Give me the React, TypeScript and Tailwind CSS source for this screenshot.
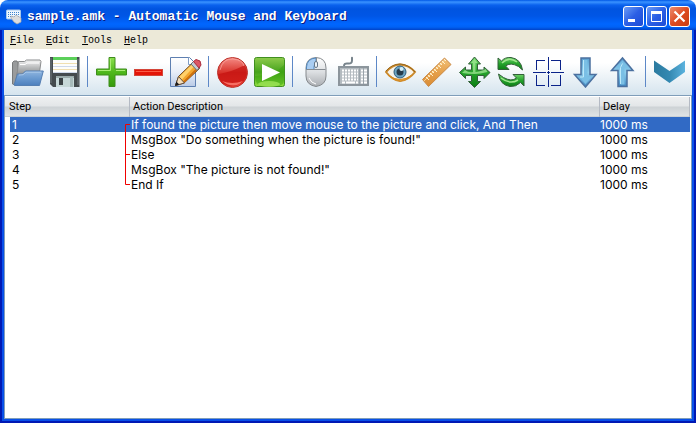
import type { ReactNode } from "react";

type Branch = "start" | "through" | "middle" | "end";

type Step = { text: string; delay: string; branch: Branch };

const steps: Step[] = [
  { text: "If found the picture then move mouse to the picture and click, And Then", delay: "1000 ms", branch: "start" },
  { text: 'MsgBox "Do something when the picture is found!"', delay: "1000 ms", branch: "through" },
  { text: "Else", delay: "1000 ms", branch: "middle" },
  { text: 'MsgBox "The picture is not found!"', delay: "1000 ms", branch: "through" },
  { text: "End If", delay: "1000 ms", branch: "end" },
];

const branchPaths: Record<Branch, string> = {
  start: "M6 7.5H.5V15",
  through: "M.5 0V15",
  middle: "M.5 0V15M.5 7.5H6",
  end: "M.5 0V7.5H5",
};

function Icon({ children }: { children: ReactNode }) {
  return (
    <svg viewBox="0 0 32 32" className="size-8" aria-hidden="true">
      {children}
    </svg>
  );
}

function Gradients() {
  const list: [string, string, string, string][] = [
    ["gray", "#f4f4f4", "#b5b7b8", "#85888a"],
    ["blue", "#8fb5df", "#6a9ad0", "#4d80bd"],
    ["green", "#8ce04e", "#4fb81c", "#369a0c"],
    ["leaf", "#72d56c", "#25a32c", "#0b7d13"],
    ["play", "#8ecb4c", "#46a31c", "#8fdd3e"],
    ["sphere", "#f58c86", "#d8332b", "#f5493c"],
    ["mouse", "#ffffff", "#dcdfe2", "#a9adb1"],
    ["page", "#ffffff", "#e8eef8", "#b9cbe6"],
    ["arrow", "#5a9fd0", "#8fd0ee", "#3f86c0"],
    ["wood", "#f2c27a", "#e5a04b", "#d98c35"],
  ];
  return (
    <svg className="absolute size-0" aria-hidden="true">
      <defs>
        {list.map(([id, a, b, c]) => (
          <linearGradient key={id} id={id} x1="0" y1="0" x2="0" y2="1">
            <stop offset="0" stopColor={a} />
            <stop offset=".5" stopColor={b} />
            <stop offset="1" stopColor={c} />
          </linearGradient>
        ))}
        <linearGradient id="chevron">
          <stop offset="0" stopColor="#2b7a9f" />
          <stop offset=".5" stopColor="#3489b2" />
          <stop offset="1" stopColor="#5cb3de" />
        </linearGradient>
      </defs>
    </svg>
  );
}

const icons: Record<string, ReactNode> = {
  Open: (
    <>
      <path d="M.5 28V6.5L2 5h3l1 2v6L3 29Z" fill="#999b9c" stroke="#77797a" />
      <path d="M5 20 6.5 5.5h6l2-1.5h13.5l1 1.5L27 20Z" fill="url(#gray)" stroke="#8b8d8e" />
      <path d="M8 8.500h5l2-1.500h12" stroke="#fff" fill="none" />
      <path d="M2 29 5.5 18h5l3-3h17.8L27.5 29.5H3Z" fill="url(#blue)" stroke="#557fb2" />
      <path d="m7 19 4-.3 3-2.5h15" fill="none" stroke="#a9c8ea" />
    </>
  ),
  Save: (
    <>
      <path d="M1 1h29.5v30H4l-3-3Z" fill="#454b4e" />
      <path d="M4 2h24v15H4Z" fill="#fdfdfb" />
      <path d="M4 1h24v3H4Z" fill="#5bd05a" />
      <path d="M4 7.5h24M4 13.5h24" stroke="#f0dfb0" />
      <path d="M4 10.5h24M4 16.5h24" stroke="#cfd9ea" />
      <path d="M7 20h18v11H7Z" fill="#c7d8d8" />
      <path d="M7 20h18v2H7Z" fill="#9babab" />
      <path d="M10 22h4v7h-4Z" fill="#3b4245" />
      <path d="M21 21h3v10h-3Z" fill="#a8bbbb" />
      <path d="M2 2v25M29 3v26" stroke="#737b7e" />
    </>
  ),
  Add: (
    <>
      <path d="M13 1.5h6V13h11.5v6H19v11.5h-6V19H.5v-6H13Z" fill="url(#green)" stroke="#3f8d1c" />
      <path d="M14.5 3v11.5H2M20 14.5h9" fill="none" stroke="#a9ed75" />
    </>
  ),
  Remove: (
    <>
      <rect x="1.5" y="13.5" width="28" height="6" fill="#e31508" stroke="#d44538" />
      <path d="M3 15.5h25" stroke="#fb5b45" />
    </>
  ),
  Edit: (
    <>
      <path d="M.5 1.5h19l6 6v23H.5Z" fill="url(#page)" stroke="#5d7fb1" />
      <path d="M18.5 1.5v7h7" fill="#fff" stroke="#7e9bc3" />
      <path d="m5.5 29.5 3-9L23.5 6l6 6.5L14 27Z" fill="#f3a52c" stroke="#68451f" />
      <path d="m9 21 15-14.5 2 2-14 15Z" fill="#ffd16b" />
      <path d="m13 27 15-15" stroke="#cd710e" strokeWidth="2" />
      <path d="m5.5 29.5 3-9 6 6.5Z" fill="#f4dfbd" stroke="#66503b" />
      <path d="m5 30 1.3-4.5 3 3Z" fill="#1d1d1d" />
      <path d="m21 8 3-3 6 6-3 3.5Z" fill="#c3cbd4" stroke="#68717c" />
      <path d="m23.5 5.5 2.5-2 4 1.5 1 4-2 3Z" fill="#dc5664" stroke="#a92b3c" />
    </>
  ),
  Record: (
    <>
      <circle cx="15.5" cy="16.5" r="15" fill="url(#sphere)" stroke="#bb342d" />
      <path d="M1 18Q8 17 14 15T28 9q4 9-1 16-7 7-16 5Q2 27 1 18Z" fill="#c20d0b" opacity=".65" />
      <path d="M5 25q10 4 21 0-9 9-21 0" fill="#ff8274" opacity=".8" />
      <path d="M3 14Q6 2 16 3t11 7" fill="none" stroke="#fbaaa3" opacity=".7" />
    </>
  ),
  Play: (
    <>
      <rect x=".5" y="1.5" width="30" height="29" rx="2" fill="url(#play)" stroke="#408f20" />
      <path d="M1 20Q20 20 30 9v15q0 6-8 6H7q-6-2-6-10Z" fill="#36a20c" opacity=".45" />
      <ellipse cx="15" cy="28" rx="11" ry="3" fill="#b6f36a" opacity=".6" />
      <path d="M8 8v17l18-8.5Z" fill="#fff" />
    </>
  ),
  "Mouse action": (
    <>
      <path d="M5 12q0-10 10-10.500 10 .5 10 10.500v8q0 9-10 10.500Q5 29 5 20Z" fill="url(#mouse)" stroke="#85898d" />
      <path d="M5.500 13.500V11Q6 2.500 15 2v6q-2 0-2 3v2.500Z" fill="#a9cdf2" stroke="#5187bd" />
      <path d="M5.500 13.500h19M15.500 2v6" stroke="#858b91" />
      <rect x="13.500" y="5.500" width="3" height="6" rx="1.500" fill="#eef3f7" stroke="#66788a" />
      <path d="M8 22q2 5 7 6" stroke="#fff" fill="none" />
    </>
  ),
  "Keyboard action": (
    <>
      <path d="M6 10Q6 7 10 7.500t4-3 0-2.500" fill="none" stroke="#77838b" strokeWidth="2" />
      <rect x="1" y="11" width="29" height="18" fill="#b4bbc0" stroke="#8c959c" strokeWidth="2" />
      <path d="M4 14.500h16M4 17.500h16M4 20.500h16M4 23.500h16" stroke="#fff" strokeWidth="2" strokeDasharray="2 1" />
      <path d="M4 26.500h3m1 0h9m1 0h2M23 14.500h6M23 17.500h6M23 20.500h6M23 23.500h6M23 26.500h6" stroke="#fff" strokeWidth="2" strokeDasharray="9 1" />
      <path d="M21.500 12v16M25.500 12v16" stroke="#9aa3aa" />
    </>
  ),
  Watch: (
    <>
      <path d="M1 16Q7 9 15 8.500 24 9 30 16q-6 8-15 9Q7 24 1 16Z" fill="#f7f4ec" stroke="#c9892d" strokeWidth="2" />
      <path d="M1 15Q7 8 15 8t15 8" fill="none" stroke="#99671b" />
      <path d="M3 19q12 9 24 0-11 12-24 0" fill="#eba640" stroke="#d58b23" />
      <circle cx="15" cy="16" r="6" fill="#6ca3c1" stroke="#315f7c" />
      <circle cx="15" cy="16" r="3.500" fill="#263b4b" />
      <circle cx="16.500" cy="13" r="2" fill="#d4eef8" />
    </>
  ),
  Measure: (
    <>
      <path d="M.5 23.500 22.500 2l6.500 6.500L6.500 30.500Z" fill="url(#wood)" stroke="#c98945" />
      <path d="m4 21 3 3m-1-5 2 2m0-4 3 3m-1-5 2 2m0-4 3 3m-1-5 2 2m0-4 3 3m-1-5 2 2m0-4 3 3m-1-5 2 2" stroke="#fff0cf" />
      <path d="m2 25 21-21" stroke="#f9d291" />
    </>
  ),
  Move: (
    <>
      <path d="m15.500 1 6 7h-3v6H25v-3l6 5.500-6 6v-3h-6.500v6h3l-6 6-6-6h3v-6H6.500v3l-6-6 6-5.500v3h6V8h-3Z" fill="url(#leaf)" stroke="#33603a" />
      <path d="m15.500 3 3 4h-2v9q7-1 10-3l2 3q-7 2-13 2T3 17l3-3q4 3 8 2V7h-2Z" fill="#a9ec9c" opacity=".7" />
    </>
  ),
  Refresh: (
    <>
      <path d="M2 2v11.500h11L9.500 10q5-4 13 .5l4 3.500Q25 3 15 1.500 9 1 5.500 5Z" fill="url(#leaf)" stroke="#33603a" />
      <path d="M28 30V18.500H17l3.500 3.500q-5 4-13-.5l-5-3.500Q4 29 14 30.500q6 .5 10.500-4Z" fill="url(#leaf)" stroke="#33603a" />
      <path d="M6 7q7-7 15-1M5 22q9 7 17 2" fill="none" stroke="#a1e78f" strokeWidth="1.500" />
    </>
  ),
  Locate: (
    <path
      d="M3.500 14V4.500H12m6 0h9.500V14m0 5v10.500H18m-6 0H3.500V19M15.500 1v13m0 1v3m0 1v12M0 16.500h13m1 0h3m1 0h13"
      fill="none"
      stroke="#0b2389"
      shapeRendering="crispEdges"
    />
  ),
  "Move down": (
    <>
      <path d="M11 2h9v16.500h6L15.500 31 4.500 18.500H11Z" fill="url(#arrow)" stroke="#4b709f" strokeWidth="1.500" />
      <path d="M13.500 4h4v17h4l-6 7-6-7h4Z" fill="#7abfe5" />
      <path d="M13.500 4v17H10" fill="none" stroke="#bde9fa" />
    </>
  ),
  "Move up": (
    <>
      <path d="M11 30.500h9v-16h6L15.500 2 4.500 14.500H11Z" fill="url(#arrow)" stroke="#4b709f" strokeWidth="1.500" />
      <path d="M13.500 28.500h4v-17h4l-6-7-6 7h4Z" fill="#7abfe5" />
      <path d="M13.500 28V11.500l2-4" fill="none" stroke="#bde9fa" />
    </>
  ),
  More: <path d="M0 4.500 15.500 15 31 4.500V16L15.500 27 0 16Z" fill="url(#chevron)" />,
};

const toolGroups = [
  ["Open", "Save"],
  ["Add", "Remove", "Edit"],
  ["Record", "Play"],
  ["Mouse action", "Keyboard action"],
  ["Watch", "Measure", "Move", "Refresh", "Locate", "Move down", "Move up"],
  ["More"],
];

function CaptionButton({ label, close, children }: { label: string; close?: boolean; children: ReactNode }) {
  return (
    <button
      type="button"
      aria-label={label}
      className={`size-[21px] rounded-[3px] border border-white bg-linear-to-br ${
        close ? "from-[#ec8a6c] via-[#dd4b20] to-[#c83c12]" : "from-[#6c9bf5] via-[#2c5fe5] to-[#1c4bd6]"
      }`}
    >
      <svg viewBox="0 0 19 19" className="size-[19px]" aria-hidden="true">
        {children}
      </svg>
    </button>
  );
}

export default function App() {
  return (
    <div className="flex min-h-screen flex-col bg-white">
      <Gradients />
      <header className="flex h-[30px] items-center rounded-t-lg bg-[linear-gradient(180deg,#0058e6_0,#3a93ff_2px,#0a62ee_5px,#0054e0_9px,#0056e6_16px,#0066ff_24px,#0062f6_27px,#0043c8_30px)] px-1.5 pt-[3px]">
        <svg viewBox="0 0 16 16" className="size-4" aria-hidden="true">
          <rect x=".5" y="1" width="14" height="9" rx="1" fill="#eef6ff" stroke="#a5c9ee" />
          <path d="M2 3.500h11M2 5.500h11M2 7.500h11" stroke="#3c83cc" strokeDasharray="1 1" />
          <path d="m5 7 3 1 2-2 5 3v4l-4 2-3-2-3-4Z" fill="#ddd" stroke="#aaa" strokeWidth=".7" />
        </svg>
        <h1 className="ml-[5px] flex-1 truncate font-['Liberation_Mono',monospace] text-[13px] font-bold leading-5 text-white [text-shadow:1px_1px_#0a1a80]">
          sample.amk - Automatic Mouse and Keyboard
        </h1>
        <div className="flex gap-0.5">
          <CaptionButton label="Minimize">
            <path d="M4 12h7v3H4Z" fill="#fff" />
          </CaptionButton>
          <CaptionButton label="Maximize">
            <path d="M4.500 5.500h10v9h-10Z" fill="none" stroke="#fff" />
            <path d="M4 4h11v3H4Z" fill="#fff" />
          </CaptionButton>
          <CaptionButton label="Close" close>
            <path d="m4.500 4.500 10 10m0-10-10 10" stroke="#fff" strokeWidth="2.200" />
          </CaptionButton>
        </div>
      </header>

      <div className="flex flex-1 flex-col border-2 border-t-0 border-[#0019b4]">
        <div className="flex flex-1 flex-col border-2 border-t-0 border-[#0850e8]">
          <nav className="flex h-[19px] bg-[#ece9d8] pl-1.5 pt-0.5">
            {["File", "Edit", "Tools", "Help"].map((item) => (
              <button key={item} type="button" className="mr-3 font-['Liberation_Mono',monospace] text-[10px] leading-4 text-black">
                <span className="underline">{item[0]}</span>
                {item.slice(1)}
              </button>
            ))}
          </nav>

          <div
            role="toolbar"
            aria-label="Actions"
            className="flex h-[46px] items-center overflow-hidden bg-linear-to-b from-white from-30% to-[#d5e4ee] pb-px pl-[5px]"
          >
            {toolGroups.map((group, index) => (
              <div key={group[0]} className="flex shrink-0 items-center">
                {index > 0 && <span className="ml-1 mr-[5px] h-[31px] w-px bg-[#5d88c7]" />}
                {group.map((name) => (
                  <button key={name} type="button" aria-label={name} title={name} className="w-[37px] pl-[3px]">
                    <Icon>{icons[name]}</Icon>
                  </button>
                ))}
              </div>
            ))}
          </div>

          <main className="flex-1 border border-[#7f9db9] bg-white pr-px pt-px">
            <table className="w-full table-fixed border-separate border-spacing-0 text-left">
              <colgroup>
                <col className="w-[125px]" />
                <col />
                <col className="w-[90px]" />
              </colgroup>
              <thead>
                <tr className="h-5 bg-[linear-gradient(180deg,#eef0f1_0,#e3e6e8_9px,#cdd2d5_10px,#dfe3e5_19px,#b8bec4_20px)] font-[Roboto,sans-serif] text-[11px] leading-4">
                  {["Step", "Action Description", "Delay"].map((title) => (
                    <th key={title} scope="col" className="border-r border-[#b4bac4] p-0 pl-[3px] font-normal first:pl-1">
                      {title}
                    </th>
                  ))}
                </tr>
              </thead>
              <tbody className="font-[Inter,sans-serif] text-[12px] leading-[15px]">
                {steps.map((step, index) => (
                  <tr key={index} className={index === 0 ? "text-white" : "text-black"}>
                    <td className="p-0 pl-[5px]">
                      <div className={`flex justify-between pl-0.5 ${index === 0 ? "bg-[#316ac5]" : ""}`}>
                        {index + 1}
                        <svg viewBox="0 0 5 15" className="h-[15px] w-[5px]" aria-hidden="true">
                          <path d={branchPaths[step.branch]} fill="none" stroke="#f00000" />
                        </svg>
                      </div>
                    </td>
                    <td className={`truncate p-0 pl-px ${index === 0 ? "bg-[#316ac5]" : ""}`}>{step.text}</td>
                    <td className={`p-0 ${index === 0 ? "bg-[#316ac5]" : ""}`}>{step.delay}</td>
                  </tr>
                ))}
              </tbody>
            </table>
          </main>
        </div>
      </div>
    </div>
  );
}
